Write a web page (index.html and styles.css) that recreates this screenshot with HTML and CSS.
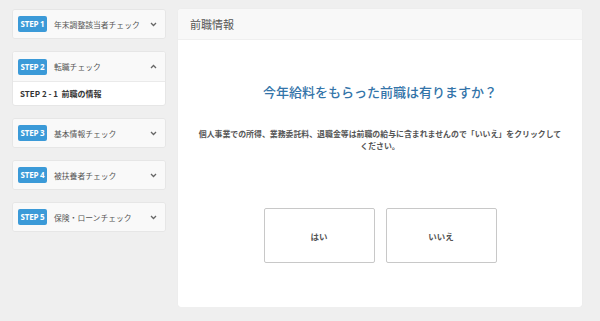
FILE: index.html
```html
<!DOCTYPE html>
<html lang="ja">
<head>
  <meta charset="UTF-8" />
  <title>前職情報</title>
  <link rel="stylesheet" href="styles.css">
</head>
<body>
  <div class="page">
    <aside class="steps">
      <div class="step">
        <div class="step-head">
          <span class="badge">STEP 1</span>
          <span class="step-name">年末調整該当者チェック</span>
          <svg class="chev" width="7" height="5" viewBox="0 0 7 5"><path d="M1 1 L3.5 3.5 L6 1" fill="none" stroke="#666" stroke-width="1.3"/></svg>
        </div>
      </div>
      <div class="step">
        <div class="step-head">
          <span class="badge">STEP 2</span>
          <span class="step-name">転職チェック</span>
          <svg class="chev" width="7" height="5" viewBox="0 0 7 5"><path d="M1 4 L3.5 1.5 L6 4" fill="none" stroke="#666" stroke-width="1.3"/></svg>
        </div>
        <div class="step-sub">STEP 2 - 1&nbsp;&nbsp;前職の情報</div>
      </div>
      <div class="step">
        <div class="step-head">
          <span class="badge">STEP 3</span>
          <span class="step-name">基本情報チェック</span>
          <svg class="chev" width="7" height="5" viewBox="0 0 7 5"><path d="M1 1 L3.5 3.5 L6 1" fill="none" stroke="#666" stroke-width="1.3"/></svg>
        </div>
      </div>
      <div class="step">
        <div class="step-head">
          <span class="badge">STEP 4</span>
          <span class="step-name">被扶養者チェック</span>
          <svg class="chev" width="7" height="5" viewBox="0 0 7 5"><path d="M1 1 L3.5 3.5 L6 1" fill="none" stroke="#666" stroke-width="1.3"/></svg>
        </div>
      </div>
      <div class="step">
        <div class="step-head">
          <span class="badge">STEP 5</span>
          <span class="step-name">保険・ローンチェック</span>
          <svg class="chev" width="7" height="5" viewBox="0 0 7 5"><path d="M1 1 L3.5 3.5 L6 1" fill="none" stroke="#666" stroke-width="1.3"/></svg>
        </div>
      </div>
    </aside>

    <main class="panel">
      <div class="panel-head">前職情報</div>
      <div class="panel-body">
        <h2 class="question">今年給料をもらった前職は有りますか？</h2>
        <p class="note">個人事業での所得、業務委託料、退職金等は前職の給与に含まれませんので「いいえ」をクリックしてください。</p>
        <div class="answers">
          <button class="answer">はい</button>
          <button class="answer">いいえ</button>
        </div>
      </div>
    </main>
  </div>
</body>
</html>
```

FILE: styles.css
```css
* {
  box-sizing: border-box;
}

body {
  margin: 0;
  background: #efefef;
  font-family: "Noto Sans CJK JP", "Noto Sans", sans-serif;
  color: #555;
}

.page {
  display: flex;
  align-items: flex-start;
  gap: 12px;
  padding: 9px 18px 0 12px;
}

.steps {
  width: 154px;
  display: flex;
  flex-direction: column;
  gap: 12px;
}

.step {
  background: #fff;
  border: 1px solid #e6e6e6;
  border-radius: 3px;
  overflow: hidden;
}

.step-head {
  display: flex;
  align-items: center;
  height: 28px;
  padding: 0 8px 0 5px;
  background: #f9f9f9;
}

.step:nth-child(2) .step-head {
  height: 30px;
  border-bottom: 1px solid #eaeaea;
}

.badge {
  background: #3b9ad8;
  color: #fff;
  font-family: "Open Sans", sans-serif;
  font-weight: 700;
  font-size: 8px;
  height: 16px;
  line-height: 16px;
  width: 29px;
  text-align: center;
  border-radius: 2px;
  letter-spacing: -0.2px;
}

.step-name {
  flex: 1;
  margin-left: 7px;
  font-size: 7.8px;
  color: #555;
}

.chev {
  display: block;
}

.step-sub {
  height: 23px;
  line-height: 23px;
  padding-left: 7px;
  font-size: 8px;
  font-weight: 700;
  color: #333;
}

.panel {
  width: 404px;
  height: 298px;
  background: #fff;
  border-radius: 3px;
  overflow: hidden;
  box-shadow: 0 0 1px rgba(0, 0, 0, 0.08);
}

.panel-head {
  height: 31px;
  line-height: 30px;
  padding-left: 12px;
  background: #f8f8f8;
  border-bottom: 1px solid #efefef;
  font-size: 11px;
  color: #555;
}

.panel-body {
  display: flex;
  flex-direction: column;
  align-items: center;
  padding: 0 19px;
}

.question {
  margin: 43px 0 0;
  font-size: 13px;
  line-height: 18px;
  font-weight: 500;
  color: #3374a9;
}

.note {
  margin: 27px 0 0;
  font-size: 7.9px;
  line-height: 12px;
  font-weight: 700;
  color: #555;
  text-align: center;
}

.answers {
  display: flex;
  gap: 11px;
  margin-top: 56px;
}

.answer {
  width: 111px;
  height: 55px;
  background: #fff;
  border: 1px solid #c8c8c8;
  border-radius: 2px;
  font-family: "Noto Sans CJK JP", sans-serif;
  font-size: 8.5px;
  font-weight: 700;
  color: #555;
  cursor: pointer;
}
```
